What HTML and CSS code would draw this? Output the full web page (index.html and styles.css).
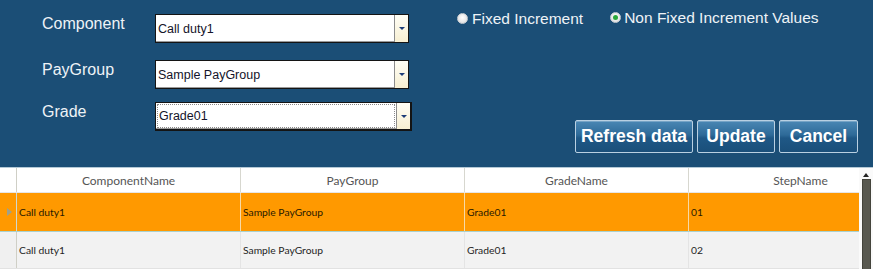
FILE: index.html
```html
<!DOCTYPE html>
<html>
<head>
<meta charset="utf-8">
<link rel="stylesheet" href="styles.css">
</head>
<body>
<div class="panel">
  <div class="form">
    <div class="frow r1">
      <span class="lbl">Component</span>
      <div class="combo"><span class="val">Call duty1</span><span class="drop"><i></i></span></div>
    </div>
    <div class="frow r2">
      <span class="lbl">PayGroup</span>
      <div class="combo"><span class="val">Sample PayGroup</span><span class="drop"><i></i></span></div>
    </div>
    <div class="frow r3">
      <span class="lbl">Grade</span>
      <div class="combo focus"><span class="val"><span class="focusbox">Grade01</span></span><span class="drop"><i></i></span></div>
    </div>
  </div>
  <div class="side">
    <div class="radios">
      <label class="radio"><span class="dot"></span>Fixed Increment</label>
      <label class="radio on"><span class="dot"></span>Non Fixed Increment Values</label>
    </div>
    <div class="buttons">
      <button class="btn w-refresh">Refresh data</button>
      <button class="btn w-update">Update</button>
      <button class="btn w-cancel">Cancel</button>
    </div>
  </div>
</div>
<div class="grid">
  <div class="gbody">
    <div class="grow head">
      <div class="rh"></div>
      <div class="cell">ComponentName</div>
      <div class="cell">PayGroup</div>
      <div class="cell">GradeName</div>
      <div class="cell">StepName</div>
    </div>
    <div class="grow sel">
      <div class="rh"><i class="arrow"></i></div>
      <div class="cell">Call duty1</div>
      <div class="cell">Sample PayGroup</div>
      <div class="cell">Grade01</div>
      <div class="cell">01</div>
    </div>
    <div class="grow alt">
      <div class="rh"></div>
      <div class="cell">Call duty1</div>
      <div class="cell">Sample PayGroup</div>
      <div class="cell">Grade01</div>
      <div class="cell">02</div>
    </div>
  </div>
  <div class="vscroll">
    <div class="up"><i></i></div>
    <div class="thumb"></div>
  </div>
</div>
</body>
</html>
```
FILE: styles.css
```css
* { box-sizing: border-box; }
html, body { margin: 0; padding: 0; }
body {
  width: 873px;
  height: 269px;
  overflow: hidden;
  background: #ffffff;
  font-family: "Liberation Sans", Arial, sans-serif;
}

.panel {
  display: flex;
  height: 168px;
  background: #1b4e76;
  border-bottom: 1px solid #b4c9d6;
}

.form {
  padding: 14px 0 0 42px;
  width: 412px;
  flex: none;
}
.frow {
  display: flex;
  align-items: flex-start;
}
.frow.r2 { margin-top: 17px; }
.frow.r3 { margin-top: 13px; }

.lbl {
  width: 113px;
  flex: none;
  padding-top: 1px;
  font-size: 16px;
  line-height: 18px;
  color: #eef3f7;
}

.combo {
  display: flex;
  width: 254px;
  height: 29px;
  background: #ffffff;
  border: 1px solid #141414;
  box-shadow: inset -1px -1px 0 #9a9a9a;
}
.combo.focus { width: 257px; border-width: 1px 2px 2px 1px; }
.val {
  flex: 1;
  display: flex;
  align-items: center;
  padding-left: 2px;
  font-size: 12.5px;
  color: #14142a;
}
.focus .val { padding: 1px; }
.focusbox {
  display: flex;
  align-items: center;
  width: 100%;
  height: 100%;
  padding-left: 1px;
  border: 1px dotted #8a8a8a;
}
.drop {
  width: 14px;
  flex: none;
  display: flex;
  align-items: center;
  justify-content: center;
  border-left: 1px solid #8c8c8c;
  background: linear-gradient(#fffef6, #f7efd2);
}
.drop i {
  width: 0;
  height: 0;
  border-left: 3px solid transparent;
  border-right: 3px solid transparent;
  border-top: 3px solid #1d3c78;
}

.side {
  margin-left: 45px;
  width: 401px;
  display: flex;
  flex-direction: column;
  padding: 9px 0 14px 0;
}
.radios {
  display: flex;
  align-items: flex-start;
}
.radio {
  display: flex;
  align-items: center;
  font-size: 15.5px;
  line-height: 19px;
  color: #eef3f7;
}
.radio .dot {
  width: 11px;
  height: 11px;
  margin-right: 4px;
  border-radius: 50%;
  background: radial-gradient(circle at 50% 40%, #ffffff, #d9d9d9);
  border: 1px solid #c9ced3;
  display: flex;
  align-items: center;
  justify-content: center;
}
.radio.on { margin-left: 27px; margin-top: -1px; }
.radio.on .dot { margin-right: 3px; }
.radio.on .dot::after {
  content: "";
  width: 5px;
  height: 5px;
  border-radius: 50%;
  background: #2aa83a;
}

.buttons {
  margin-top: auto;
  display: flex;
  justify-content: flex-end;
  gap: 4px;
}
.btn {
  height: 33px;
  padding: 0;
  font-family: "Liberation Sans", Arial, sans-serif;
  font-weight: bold;
  font-size: 17.5px;
  color: #ffffff;
  border: 1px solid #b9d0e2;
  border-radius: 2px;
  background: linear-gradient(#4a87b4 0%, #2e6a98 45%, #1f5886 55%, #1a4f7a 100%);
  box-shadow: inset 0 1px 0 rgba(255,255,255,0.25);
}
.w-refresh { width: 118px; }
.w-update { width: 78px; }
.w-cancel { width: 79px; }

.grid {
  display: flex;
  height: 101px;
}
.gbody {
  width: 859px;
  overflow: hidden;
  flex: none;
}
.grow {
  display: flex;
  width: 913px;
}
.rh {
  width: 17px;
  flex: none;
  border-right: 1px solid #cfcfc6;
  display: flex;
  align-items: center;
  justify-content: center;
}
.cell {
  width: 224px;
  flex: none;
  display: flex;
  align-items: center;
  padding-left: 2px;
  border-right: 1px solid #e4e4e4;
  font-family: "Lato", "Noto Sans", sans-serif;
  font-size: 10.3px;
  color: #1e1e1e;
}
.head {
  height: 25px;
  background: #ffffff;
  border-bottom: 1px solid #e6e6e6;
}
.head .cell {
  justify-content: center;
  padding-left: 0;
  font-size: 12px;
  color: #555555;
  border-right-color: #d7d7cf;
}
.sel {
  height: 39px;
  background: #ff9900;
  border-bottom: 1px solid #a9d2cf;
}
.sel .cell { border-right-color: #f7d9a6; color: #2a1a00; }
.sel .rh { border-right-color: #cfd8d0; }
.arrow {
  width: 0;
  height: 0;
  border-top: 4px solid transparent;
  border-bottom: 4px solid transparent;
  border-left: 5px solid #9fa08a;
  margin-left: 2px;
}
.alt {
  height: 37px;
  background: #f2f2f2;
  border-bottom: 1px solid #e2e2e2;
}
.alt .rh { background: #f0f0f0; }

.vscroll {
  width: 14px;
  flex: none;
  background: #fafafa;
  display: flex;
  flex-direction: column;
  align-items: center;
}
.up {
  height: 11px;
  width: 100%;
  display: flex;
  align-items: flex-end;
  justify-content: center;
  padding-bottom: 2px;
}
.up i {
  width: 0;
  height: 0;
  border-left: 3px solid transparent;
  border-right: 3px solid transparent;
  border-bottom: 4px solid #222222;
}
.thumb {
  margin-top: 0;
  width: 9px;
  flex: 1;
  background: #595950;
  border: 1px solid #44443c;
  border-bottom: none;
}
```
